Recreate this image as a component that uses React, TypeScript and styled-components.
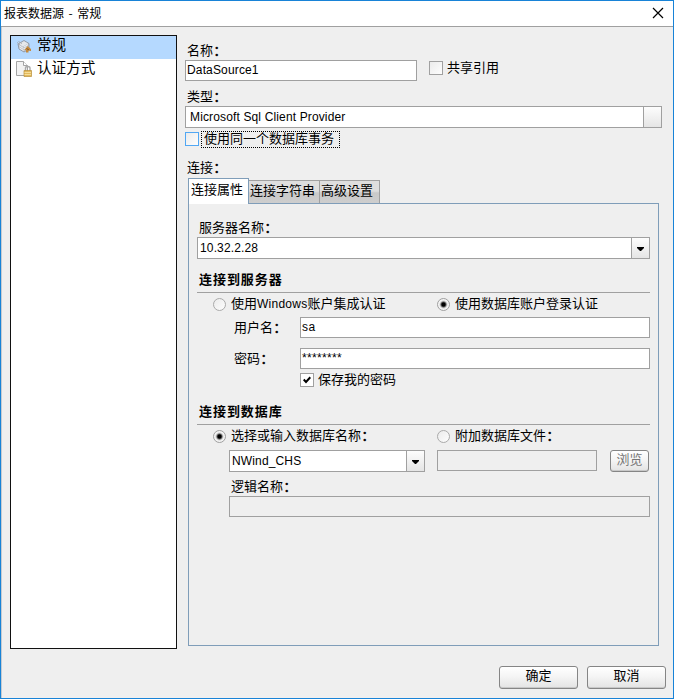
import React from "react";
import styled, { createGlobalStyle, css } from "styled-components";

const Global = createGlobalStyle`
  *, *::before, *::after { box-sizing: border-box; }
  html, body { margin: 0; padding: 0; background: #efefef; }
`;

const edge = "#a0a0a0";

const Dialog = styled.div`
  width: 674px;
  height: 699px;
  display: flex;
  flex-direction: column;
  border: 1px solid #1883d7;
  background: #efefef;
  color: #000;
  font: 13px/14px "Liberation Sans", "Noto Sans CJK SC", sans-serif;
  overflow: hidden;
`;

const TitleBar = styled.header`
  height: 26px;
  flex: none;
  display: flex;
  justify-content: space-between;
  padding: 4px 9px 0 3px;
  background: #fff;
  border-bottom: 1px solid ${edge};
  font: 12px/16px "Noto Sans CJK SC", sans-serif;
  word-spacing: 1.8px;
`;

const CloseIcon = styled.svg`
  width: 12px;
  height: 12px;
  margin-top: 2px;
`;

const Content = styled.div`
  flex: 1;
  border-left: 1px solid #c6cbd1;
`;

const Body = styled.div`
  display: flex;
  height: 623px;
  padding-left: 8px;
`;

const CategoryList = styled.ul`
  width: 167px;
  height: 614px;
  margin: 8px 0 0;
  padding: 0;
  list-style: none;
  border: 1px solid #111;
  background: #fff;
`;

const Category = styled.li<{ $selected?: boolean }>`
  display: flex;
  height: 23px;
  padding-left: 5px;
  gap: 5px;
  background: ${(p) => (p.$selected ? "#b5d9ff" : "#fff")};
  font-size: 14.6px;
  line-height: 18px;
  white-space: nowrap;
  svg { width: 16px; height: 17px; margin-top: 2px; flex: none; }
`;

const Main = styled.main`
  width: 477px;
  margin-left: 8px;
  padding-top: 16px;
`;

const Label = styled.label<{ $top?: number; $indent?: number }>`
  display: block;
  height: 14px;
  margin-top: ${(p) => p.$top ?? 0}px;
  margin-bottom: 3px;
  padding-left: ${(p) => p.$indent ?? 2}px;
  line-height: 16px;
  white-space: nowrap;
`;

const ColonMark = styled.span`
  margin-left: 0.5px;
  -webkit-text-stroke: 0.4px currentColor;
`;

const Row = styled.div<{ $top?: number; $h: number; $indent?: number }>`
  display: flex;
  height: ${(p) => p.$h}px;
  margin-top: ${(p) => p.$top ?? 0}px;
  padding-left: ${(p) => p.$indent ?? 0}px;
  align-items: flex-start;
`;

const Field = styled.div<{ $w: number; $disabled?: boolean; $spacing?: number }>`
  width: ${(p) => p.$w}px;
  height: 21px;
  flex: none;
  padding-left: 1px;
  border: 1px solid ${edge};
  background: ${(p) => (p.$disabled ? "#efefef" : "#fff")};
  font-size: 12px;
  line-height: 18px;
  letter-spacing: ${(p) => p.$spacing ?? 0.15}px;
`;

const Combo = styled.div<{ $w: number }>`
  display: flex;
  width: ${(p) => p.$w}px;
  height: 22px;
  flex: none;
  border: 1px solid ${edge};
  background: #fff;
`;

const ComboText = styled.span<{ $pad: number }>`
  flex: 1;
  padding-left: ${(p) => p.$pad}px;
  font-size: 12px;
  line-height: 20px;
  letter-spacing: 0.14px;
`;

const ComboButton = styled.span`
  display: flex;
  width: 18px;
  align-items: center;
  justify-content: center;
  border-left: 1px solid ${edge};
  background: linear-gradient(#fdfdfd, #e5e5e5);
  svg { width: 7px; height: 4px; margin-top: 2px; }
`;

const CheckSquare = styled.span<{ $focused?: boolean; $checked?: boolean }>`
  display: flex;
  width: 14px;
  height: 14px;
  margin-top: 1px;
  flex: none;
  align-items: center;
  justify-content: center;
  border: 1px solid ${(p) => (p.$focused ? "#51a7f3" : edge)};
  background: ${(p) => (p.$checked ? "#fff" : "linear-gradient(135deg, #ebebeb, #fdfdfd)")};
`;

const CheckText = styled.span`
  padding-left: 4px;
  line-height: 16px;
  white-space: nowrap;
`;

const FocusText = styled.span`
  width: 139px;
  height: 17px;
  margin-left: 2px;
  padding-left: 2px;
  border: 1px dotted #000;
  line-height: 14px;
  white-space: nowrap;
`;

const Tabs = styled.div`
  display: flex;
  align-items: flex-start;
  height: 26px;
  margin: 4px 0 0 3px;
  position: relative;
`;

const Tab = styled.button<{ $active?: boolean; $w: number }>`
  display: block;
  width: ${(p) => p.$w}px;
  height: 23px;
  margin: 2px 0 0;
  padding: 0 0 2px 1px;
  border: 1px solid ${edge};
  border-left: 0;
  border-bottom: 0;
  background: linear-gradient(#dedede 0 46%, #c9c9c9 54%, #cecece);
  color: #000;
  font: inherit;
  line-height: 18px;
  text-align: left;
  white-space: nowrap;
  ${(p) =>
    p.$active &&
    css`
      height: 26px;
      margin: 0;
      padding: 0 0 4px 2px;
      border: 1px solid #7f9db9;
      border-bottom: 0;
      background: #fff;
    `}
`;

const Panel = styled.section`
  width: 471px;
  height: 443px;
  margin: -1px 0 0 3px;
  padding: 16px 8px 0;
  border: 1px solid #7f9db9;
`;

const Heading = styled.h2<{ $top: number }>`
  height: 21px;
  margin: ${(p) => p.$top}px 0 0;
  padding-left: 2px;
  border-bottom: 1px solid ${edge};
  font-size: 13px;
  font-weight: 700;
  line-height: 15px;
  letter-spacing: 0.95px;
`;

const Choice = styled.span<{ $w: number }>`
  display: flex;
  width: ${(p) => p.$w}px;
  height: 16px;
  line-height: 16px;
  gap: 5px;
  white-space: nowrap;
`;

const Latin = styled.span`
  font-size: 12px;
  letter-spacing: 0.25px;
`;

const RadioDot = styled.span<{ $on?: boolean }>`
  width: 13px;
  height: 13px;
  margin-top: 2px;
  flex: none;
  border: 1px solid ${(p) => (p.$on ? "#a0a0a0" : "#aaa")};
  border-radius: 50%;
  background: ${(p) =>
    p.$on
      ? "radial-gradient(circle, #000 0 1.6px, #666 2.6px, #c8c8c8 3.4px, #f4f4f4 4.4px)"
      : "linear-gradient(135deg, #ebebeb, #fdfdfd)"};
`;

const FieldLabel = styled.span`
  width: 66px;
  line-height: 21px;
`;

const Button = styled.button<{ $w: number; $h: number; $disabled?: boolean }>`
  width: ${(p) => p.$w}px;
  height: ${(p) => p.$h}px;
  padding: 0 0 3px;
  border: 1px solid #858585;
  border-radius: 3px;
  background: linear-gradient(#fff, #f5f5f5 45%, #e3e3e3);
  box-shadow: inset 0 -1px 0 #c8c8c8;
  color: ${(p) => (p.$disabled ? "#777" : "#000")};
  font: inherit;
  line-height: 16px;
`;

const Footer = styled.footer`
  display: flex;
  justify-content: flex-end;
  gap: 9px;
  padding: 16px 7px 0 0;
`;

const Colon = () => <ColonMark>：</ColonMark>;

const Arrow = () => (
  <svg viewBox="0 0 7 4"><path d="M0 0H7V1L4 4H3L0 1Z" fill="#000" /></svg>
);

const GeneralIcon = () => (
  <svg viewBox="0 0 16 17">
    <path d="M2 6L8 2.5L13 5.5V11L8 14L3 11Z" fill="#c0c4cb" stroke="#878e9a" strokeWidth=".8" />
    <path d="M3 6L8 3.2L12 5.5L7 8.5Z" fill="#e6e8eb" />
    <path d="M3.5 8L7.5 10.5M3.5 10L7.5 12.5M8 9L12 6.5M8 11L12 8.5" stroke="#f7f7f7" strokeWidth=".9" />
    <path d="M1 4.5L4 6.5M2.5 3.5L6 5.5" stroke="#a4a8af" />
    <path d="M8.5 12L11.5 8L15 11V13H13.5V12.5H12.5V14.5H10V12Z" fill="#c68a3c" />
    <path d="M10.5 10.5L13 12" stroke="#84592b" />
  </svg>
);

const AuthIcon = () => (
  <svg viewBox="0 0 16 17">
    <path d="M.5 .5H7.5L11.5 4.5V14.5H.5Z" fill="#f3f3f3" stroke="#a5a5a5" />
    <path d="M7.5 .5V4.5H11.5" fill="#fff" stroke="#a5a5a5" />
    <path d="M9.5 10V7C9.5 5 14 5 14 7V10" fill="none" stroke="#aaa" strokeWidth="1.4" />
    <path d="M8 9.5H15.5V15.5H8Z" fill="#e3b95c" stroke="#b88f3b" strokeWidth=".7" />
    <path d="M8.5 11.5H15M8.5 13.5H15" stroke="#f5dd98" />
  </svg>
);

export default function App() {
  return (
    <>
      <Global />
      <Dialog lang="zh-CN">
        <TitleBar>
          <span>报表数据源 - 常规</span>
          <CloseIcon viewBox="0 0 12 12"><path d="M1 1L11 11M11 1L1 11" stroke="#000" strokeWidth="1.2" /></CloseIcon>
        </TitleBar>
        <Content>
          <Body>
            <CategoryList>
              <Category $selected><GeneralIcon />常规</Category>
              <Category><AuthIcon />认证方式</Category>
            </CategoryList>
            <Main>
              <Label>名称<Colon /></Label>
              <Row $h={21}>
                <Field $w={232}>DataSource1</Field>
                <Row $h={15} $indent={12}>
                  <CheckSquare />
                  <CheckText>共享引用</CheckText>
                </Row>
              </Row>
              <Label $top={8}>类型<Colon /></Label>
              <Combo $w={477}>
                <ComboText $pad={4}>Microsoft Sql Client Provider</ComboText>
                <ComboButton />
              </Combo>
              <Row $h={17} $top={3}>
                <CheckSquare $focused />
                <FocusText>使用同一个数据库事务</FocusText>
              </Row>
              <Label $top={12}>连接<Colon /></Label>
              <Tabs>
                <Tab $w={61} $active>连接属性</Tab>
                <Tab $w={71}>连接字符串</Tab>
                <Tab $w={60}>高级设置</Tab>
              </Tabs>
              <Panel>
                <Label $indent={2}>服务器名称<Colon /></Label>
                <Combo $w={453}>
                  <ComboText $pad={2}>10.32.2.28</ComboText>
                  <ComboButton><Arrow /></ComboButton>
                </Combo>
                <Heading $top={13}>连接到服务器</Heading>
                <Row $h={16} $top={3} $indent={16}>
                  <Choice $w={224}>
                    <RadioDot />
                    <span>使用<Latin>Windows</Latin>账户集成认证</span>
                  </Choice>
                  <Choice $w={200}><RadioDot $on />使用数据库账户登录认证</Choice>
                </Row>
                <Row $h={21} $top={5} $indent={37}>
                  <FieldLabel>用户名<Colon /></FieldLabel>
                  <Field $w={350} $spacing={0.6}>sa</Field>
                </Row>
                <Row $h={21} $top={10} $indent={37}>
                  <FieldLabel>密码<Colon /></FieldLabel>
                  <Field $w={350} $spacing={0.33}>********</Field>
                </Row>
                <Row $h={15} $top={3} $indent={103}>
                  <CheckSquare $checked>
                    <svg width="8" height="8" viewBox="0 0 8 8"><path d="M.7 3.5L3 6L7.3 1.3" fill="none" stroke="#000" strokeWidth="2" /></svg>
                  </CheckSquare>
                  <CheckText>保存我的密码</CheckText>
                </Row>
                <Heading $top={17}>连接到数据库</Heading>
                <Row $h={16} $top={3} $indent={16}>
                  <Choice $w={224}><RadioDot $on /><span>选择或输入数据库名称<Colon /></span></Choice>
                  <Choice $w={200}><RadioDot /><span>附加数据库文件<Colon /></span></Choice>
                </Row>
                <Row $h={22} $top={6} $indent={32}>
                  <Combo $w={196}>
                    <ComboText $pad={2}>NWind_CHS</ComboText>
                    <ComboButton><Arrow /></ComboButton>
                  </Combo>
                  <Row $h={22} $indent={12}><Field $w={160} $disabled /></Row>
                  <Row $h={22} $indent={13}><Button $w={39} $h={22} $disabled>浏览</Button></Row>
                </Row>
                <Label $top={7} $indent={34}>逻辑名称<Colon /></Label>
                <Row $h={21} $indent={32}><Field $w={421} $disabled /></Row>
              </Panel>
            </Main>
          </Body>
          <Footer>
            <Button $w={79} $h={23}>确定</Button>
            <Button $w={79} $h={23}>取消</Button>
          </Footer>
        </Content>
      </Dialog>
    </>
  );
}
